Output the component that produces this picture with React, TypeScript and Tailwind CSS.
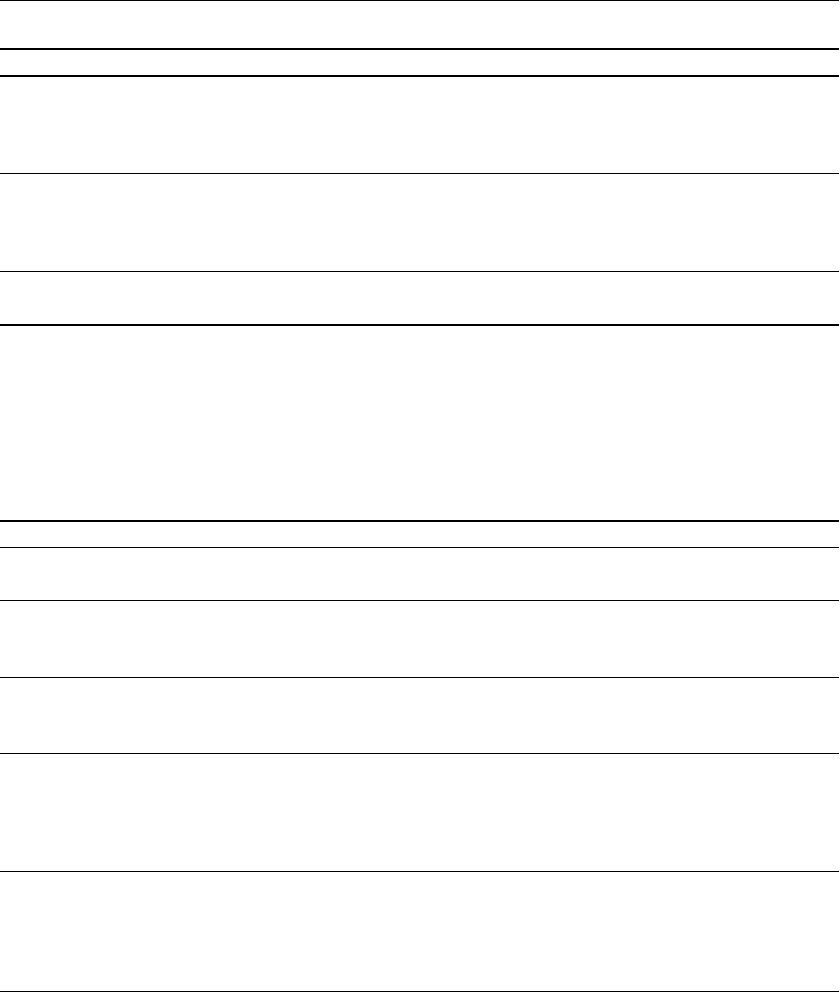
const rows = [
  "h-[47px] border-b-2",
  "h-[25px] border-b-2",
  "h-[96px] border-b",
  "h-[97px] border-b",
  "h-[52px] border-b-2",
  "h-[194px] border-b-2",
  "h-[25px] border-b",
  "h-[52px] border-b",
  "h-[76px] border-b",
  "h-[75px] border-b",
  "h-[117px] border-b",
  "h-[119px] border-b",
];

export default function App() {
  return (
    <div className="min-h-[993px] w-[840px] bg-white">
      <div className="w-[839px] border-t border-black">
        {rows.map((row, i) => (
          <div key={i} className={`box-content border-black ${row}`} />
        ))}
      </div>
    </div>
  );
}
